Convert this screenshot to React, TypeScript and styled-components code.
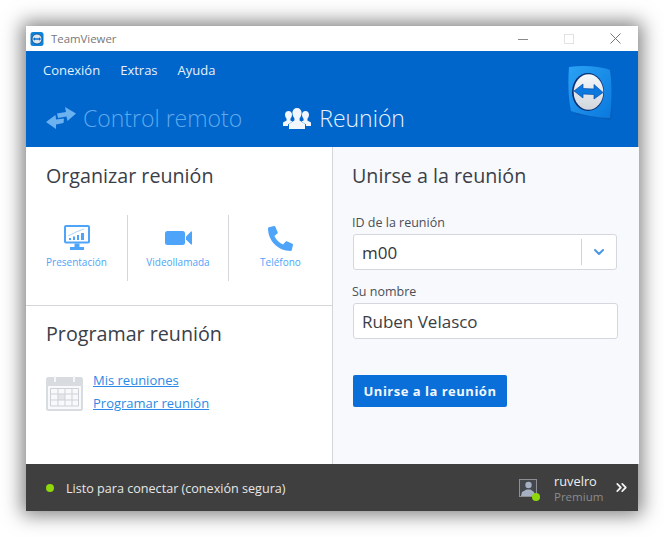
import styled, { createGlobalStyle } from "styled-components";
import { FaPhoneAlt } from "react-icons/fa";
import { FiChevronDown, FiChevronsRight } from "react-icons/fi";

const GlobalStyle = createGlobalStyle`
    html, body {
        margin: 0;
        padding: 0;
        background: #fff;
    }
    body {
        font-family: "Open Sans", "Noto Sans", sans-serif;
        overflow: hidden;
    }
`;

const Page = styled.div`
    width: 664px;
    height: 537px;
    padding: 26px 0 0 26px;
    box-sizing: border-box;
`;
const Window = styled.div`
    width: 612px;
    height: 485px;
    display: flex;
    flex-direction: column;
    background: #fff;
    box-shadow: 0 0 18px 4px rgba(0, 0, 0, 0.5);
`;

/* title bar */
const TitleBar = styled.div`
    height: 25px;
    display: flex;
    align-items: center;
    padding-left: 4px;
    background: #fff;
    flex: none;
`;
const TitleText = styled.span`
    margin-left: 7px;
    font-size: 11.4px;
    color: #77777c;
`;
const WindowButtons = styled.div`
    margin-left: auto;
    display: flex;
    align-items: center;
`;
const WindowButton = styled.div`
    width: 46px;
    height: 25px;
    display: flex;
    align-items: center;
    justify-content: center;
`;

/* blue header */
const Header = styled.div`
    height: 96px;
    flex: none;
    background: #0066cb;
    display: flex;
    justify-content: space-between;
`;
const HeaderLeft = styled.div`
    display: flex;
    flex-direction: column;
`;
const Menu = styled.div`
    display: flex;
    gap: 20px;
    padding: 10px 0 0 17px;
    font-size: 13px;
    line-height: 18px;
    color: #e6f1fc;
`;
const Tabs = styled.div`
    display: flex;
    margin-top: 21px;
    padding-left: 20px;
    gap: 41px;
`;
const Tab = styled.div<{ $active?: boolean }>`
    display: flex;
    align-items: center;
    gap: ${props => (props.$active ? "8px" : "7px")};
    height: 36px;
    font-size: 23px;
    font-weight: 300;
    color: ${props => (props.$active ? "#e8f2fc" : "#5fa8ee")};
`;
const Logo = styled.div`
    margin: 14px 25px 0 0;
`;

/* body */
const Main = styled.div`
    flex: 1;
    display: flex;
    min-height: 0;
`;
const LeftColumn = styled.div`
    width: 306px;
    flex: none;
    display: flex;
    flex-direction: column;
    background: #fff;
`;
const RightColumn = styled.div`
    flex: 1;
    background: #f7f9fc;
    border-left: 1px solid #d4d6da;
    padding: 15px 21px 0 19px;
`;
const Organize = styled.div`
    height: 159px;
    box-sizing: border-box;
    border-bottom: 1px solid #d4d6da;
    padding-top: 15px;
`;
const Schedule = styled.div`
    padding-top: 14px;
`;
const Heading = styled.h2<{ $inset?: boolean }>`
    margin: 0;
    padding-left: ${props => (props.$inset ? "20px" : "0")};
    font-size: 19.7px;
    line-height: 28px;
    font-weight: 400;
    color: #3a4048;
`;
const Actions = styled.div`
    display: flex;
    margin-top: 25px;
`;
const Action = styled.div<{ $w: number; $line?: boolean }>`
    width: ${props => props.$w}px;
    height: 66px;
    flex: none;
    display: flex;
    flex-direction: column;
    align-items: center;
    border-right: ${props => (props.$line ? "1px solid #d4d6da" : "none")};
    box-sizing: border-box;
`;
const ActionIcon = styled.div`
    height: 28px;
    margin-top: 9px;
    display: flex;
    align-items: center;
    justify-content: center;
    color: #4ea4f8;
`;
const ActionLabel = styled.div`
    margin-top: 2px;
    font-size: 10px;
    line-height: 16px;
    color: #4ea4f8;
`;
const ScheduleRow = styled.div`
    display: flex;
    padding: 28px 0 0 20px;
    gap: 10px;
`;
const Links = styled.div`
    display: flex;
    flex-direction: column;
    gap: 5px;
    margin-top: -5px;
`;
const Link = styled.a`
    font-size: 13px;
    line-height: 18px;
    color: #2c8ae6;
    text-decoration: underline;
`;

/* form */
const FieldLabel = styled.div<{ $top: number }>`
    margin-top: ${props => props.$top}px;
    font-size: 12.5px;
    line-height: 18px;
    color: #4a4f56;
`;
const ComboBox = styled.div`
    margin: 2px 0 0 1px;
    width: 264px;
    height: 36px;
    box-sizing: border-box;
    border: 1px solid #d4d8de;
    border-radius: 3px;
    background: #fff;
    display: flex;
    align-items: center;
`;
const ComboValue = styled.div`
    flex: 1;
    padding-left: 8px;
    font-size: 17px;
    color: #33373d;
`;
const ComboButton = styled.div`
    width: 34px;
    height: 26px;
    border-left: 1px solid #c6d4e4;
    display: flex;
    align-items: center;
    justify-content: center;
    color: #4c97e4;
`;
const TextBox = styled.div`
    margin: 2px 0 0 1px;
    width: 265px;
    height: 36px;
    box-sizing: border-box;
    border: 1px solid #d4d8de;
    border-radius: 3px;
    background: #fff;
    padding-left: 8px;
    font-size: 17px;
    line-height: 35px;
    color: #3a3e44;
`;
const JoinButton = styled.button`
    display: block;
    margin: 36px 0 0 1px;
    width: 154px;
    height: 32px;
    border: none;
    border-radius: 2px;
    background: #0a6fd9;
    color: #f2f8fe;
    font-family: inherit;
    font-size: 13px;
    font-weight: 700;
    letter-spacing: 0.5px;
    padding: 0;
`;

/* status bar */
const StatusBar = styled.div`
    height: 47px;
    flex: none;
    background: #3f3f3f;
    display: flex;
    align-items: center;
    padding: 0 8px 0 20px;
`;
const StatusDot = styled.span`
    width: 8px;
    height: 8px;
    border-radius: 50%;
    background: #8fd80a;
`;
const StatusText = styled.span`
    margin: 1px 0 0 12px;
    font-size: 12.6px;
    color: #e6e6e6;
`;
const Account = styled.div`
    margin-left: auto;
    display: flex;
    align-items: center;
`;
const Avatar = styled.div`
    position: relative;
    width: 18px;
    height: 18px;
    margin-right: 17px;
`;
const AvatarDot = styled.span`
    position: absolute;
    right: -3px;
    bottom: -4px;
    width: 8px;
    height: 8px;
    border-radius: 50%;
    background: #8fd80a;
`;
const AccountText = styled.div`
    width: 59px;
    display: flex;
    flex-direction: column;
    padding-top: 2px;
`;
const AccountName = styled.span`
    font-size: 12.8px;
    line-height: 16px;
    color: #eeeeee;
`;
const AccountPlan = styled.span`
    font-size: 11.5px;
    line-height: 15px;
    color: #8b8b8b;
`;
const Expand = styled.div`
    display: flex;
    color: #f2f2f2;
`;

function SmallLogo() {
    return (
        <svg width="14" height="16" viewBox="0 0 14 16">
            <rect x="0.5" y="1" width="13" height="14" rx="2.5" fill="#0e83dc" />
            <circle cx="7" cy="8" r="5" fill="#dfe8ef" stroke="#0b3f7a" strokeWidth="0.8" />
            <path d="M2.8 8 5 6.3V7.3H9V6.3L11.2 8 9 9.7V8.7H5V9.7Z" fill="#0b6fd0" />
        </svg>
    );
}

function BigLogo() {
    return (
        <svg width="46" height="56" viewBox="0 0 46 56">
            <defs>
                <linearGradient id="tile" x1="0" y1="0" x2="1" y2="1">
                    <stop offset="0" stopColor="#2aa2f4" />
                    <stop offset="1" stopColor="#0a78de" />
                </linearGradient>
                <linearGradient id="disc" x1="0" y1="0" x2="0" y2="1">
                    <stop offset="0" stopColor="#f6f8fa" />
                    <stop offset="1" stopColor="#cfd6dc" />
                </linearGradient>
            </defs>
            <path d="M6 4 44 6 45 50 43 55 8 49Z" fill="#0a5cb8" />
            <path d="M2 2C16 0 32 1 43 5 45 18 45 36 43 53 30 53 16 50 4 46 1 32 1 16 2 2Z" fill="url(#tile)" />
            <ellipse cx="21" cy="27" rx="16" ry="19" fill="#0b2f73" />
            <ellipse cx="21.5" cy="27" rx="14.8" ry="17.8" fill="url(#disc)" />
            <path d="M7 26 16 19V23.5L27 24V19.5L36 27.5 27 34V29.5L16 29V33Z" fill="#0a78de" stroke="#0a4fa8" strokeWidth="0.7" />
        </svg>
    );
}

function SwapIcon() {
    return (
        <svg width="30" height="22" viewBox="0 0 30 22" fill="#6cb1f0">
            <path d="M11 6.5 20 5 19 0 30 6.5 21.5 14 20.5 9.5 12 11Z" />
            <path d="M18 11.5 10 12.5 9.5 8 0 15 10 22 10 17.5 17.5 16Z" />
        </svg>
    );
}

function UsersIcon() {
    return (
        <svg width="28" height="21" viewBox="0 0 28 21" fill="#f2f7fd">
            <path d="M5.5 3C7.6 3 9 4.6 9 6.6 9 8.4 8.2 10 7.4 10.8V12.4L9.5 13.4 5 16.6V18H0V14.6L3.6 12.4V10.8C2.8 10 2 8.4 2 6.6 2 4.6 3.4 3 5.5 3Z" />
            <path d="M22.5 3C24.6 3 26 4.6 26 6.6 26 8.4 25.2 10 24.4 10.8V12.4L28 14.6V18H23V16.6L18.5 13.4 20.6 12.4V10.8C19.8 10 19 8.4 19 6.6 19 4.6 20.4 3 22.5 3Z" />
            <path d="M14 0C16.8 0 18.6 2.1 18.6 4.8 18.6 7.2 17.6 9.2 16.6 10.2V12.4L22 16V21H6V16L11.4 12.4V10.2C10.4 9.2 9.4 7.2 9.4 4.8 9.4 2.1 11.2 0 14 0Z" />
        </svg>
    );
}

function MonitorIcon() {
    return (
        <svg width="26" height="26" viewBox="0 0 26 26">
            <rect x="0" y="0" width="26" height="18.5" rx="2" fill="#4ea4f8" />
            <rect x="2" y="2" width="22" height="14.5" fill="#fff" />
            <path d="M10.5 18.5H15.5V22H20V25H6V22H10.5Z" fill="#4ea4f8" />
            <path d="M5 13h2v2H5zM9 11.5h2V15H9zM13 10h2v5h-2zM17 8h3v7h-3z" fill="#4ea4f8" />
            <path d="M4 11 12 7 20 4" stroke="#9cc9f5" strokeWidth="0.8" fill="none" />
        </svg>
    );
}

function VideoIcon() {
    return (
        <svg width="27" height="16" viewBox="0 0 27 16" fill="#4ea4f8">
            <rect x="0" y="1" width="20" height="14" rx="2.5" />
            <path d="M21 6.5 26 1.5H27V14.5H26L21 9.5Z" />
        </svg>
    );
}

function CalendarIcon() {
    return (
        <svg width="37" height="35" viewBox="0 0 37 35">
            <rect x="0" y="1" width="37" height="34" rx="2.5" fill="#d8dce0" />
            <rect x="2" y="10" width="33" height="23" fill="#f8f9fa" />
            <rect x="8" y="0" width="2" height="6" fill="#f4f6f8" />
            <rect x="27" y="0" width="2" height="6" fill="#f4f6f8" />
            <rect x="12" y="18" width="7" height="6" fill="#e4e7ea" />
            <path d="M4.5 12.5H32.5M4.5 18H32.5M4.5 24H32.5M4.5 30H32.5M4.5 12.5V30M12 12.5V30M19 12.5V30M26 12.5V30M32.5 12.5V30" stroke="#cdd1d6" strokeWidth="1" fill="none" />
        </svg>
    );
}

function UserIcon() {
    return (
        <svg width="18" height="18" viewBox="0 0 18 18">
            <rect x="0.5" y="0.5" width="17" height="17" fill="#44474c" stroke="#8d9095" />
            <circle cx="9.5" cy="6" r="3.2" fill="#a5b1c2" />
            <path d="M2 17 3 13 7.5 10.5H11.5L15 13 16 17Z" fill="#a5b1c2" />
        </svg>
    );
}

function App() {
    return (
        <Page>
            <GlobalStyle />
            <Window>
                <TitleBar>
                    <SmallLogo />
                    <TitleText>TeamViewer</TitleText>
                    <WindowButtons>
                        <WindowButton>
                            <svg width="10" height="10" viewBox="0 0 10 10"><path d="M0 5.5H10" stroke="#8a8a8a" /></svg>
                        </WindowButton>
                        <WindowButton>
                            <svg width="10" height="10" viewBox="0 0 10 10"><rect x="0.5" y="0.5" width="9" height="9" fill="none" stroke="#e2e2e2" /></svg>
                        </WindowButton>
                        <WindowButton>
                            <svg width="11" height="11" viewBox="0 0 11 11"><path d="M0.5 0.5 10.5 10.5M10.5 0.5 0.5 10.5" stroke="#777" /></svg>
                        </WindowButton>
                    </WindowButtons>
                </TitleBar>

                <Header>
                    <HeaderLeft>
                        <Menu>
                            <span>Conexión</span>
                            <span>Extras</span>
                            <span>Ayuda</span>
                        </Menu>
                        <Tabs>
                            <Tab><SwapIcon />Control remoto</Tab>
                            <Tab $active><UsersIcon />Reunión</Tab>
                        </Tabs>
                    </HeaderLeft>
                    <Logo><BigLogo /></Logo>
                </Header>

                <Main>
                    <LeftColumn>
                        <Organize>
                            <Heading $inset>Organizar reunión</Heading>
                            <Actions>
                                <Action $w={102} $line>
                                    <ActionIcon><MonitorIcon /></ActionIcon>
                                    <ActionLabel>Presentación</ActionLabel>
                                </Action>
                                <Action $w={101} $line>
                                    <ActionIcon><VideoIcon /></ActionIcon>
                                    <ActionLabel>Videollamada</ActionLabel>
                                </Action>
                                <Action $w={103}>
                                    <ActionIcon><FaPhoneAlt size={25} /></ActionIcon>
                                    <ActionLabel>Teléfono</ActionLabel>
                                </Action>
                            </Actions>
                        </Organize>
                        <Schedule>
                            <Heading $inset>Programar reunión</Heading>
                            <ScheduleRow>
                                <CalendarIcon />
                                <Links>
                                    <Link>Mis reuniones</Link>
                                    <Link>Programar reunión</Link>
                                </Links>
                            </ScheduleRow>
                        </Schedule>
                    </LeftColumn>
                    <RightColumn>
                        <Heading>Unirse a la reunión</Heading>
                        <FieldLabel $top={24}>ID de la reunión</FieldLabel>
                        <ComboBox>
                            <ComboValue>m00</ComboValue>
                            <ComboButton><FiChevronDown size={16} strokeWidth={3} /></ComboButton>
                        </ComboBox>
                        <FieldLabel $top={13}>Su nombre</FieldLabel>
                        <TextBox>Ruben Velasco</TextBox>
                        <JoinButton>Unirse a la reunión</JoinButton>
                    </RightColumn>
                </Main>

                <StatusBar>
                    <StatusDot />
                    <StatusText>Listo para conectar (conexión segura)</StatusText>
                    <Account>
                        <Avatar>
                            <UserIcon />
                            <AvatarDot />
                        </Avatar>
                        <AccountText>
                            <AccountName>ruvelro</AccountName>
                            <AccountPlan>Premium</AccountPlan>
                        </AccountText>
                        <Expand><FiChevronsRight size={17} strokeWidth={2.5} /></Expand>
                    </Account>
                </StatusBar>
            </Window>
        </Page>
    );
}

export default App;
